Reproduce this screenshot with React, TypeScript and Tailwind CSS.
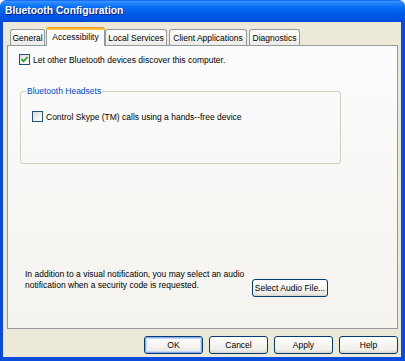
import React from "react";

function CheckBox({ checked }: { checked?: boolean }) {
  return (
    <div className="w-[11px] h-[11px] shrink-0 border border-[#1C5180] bg-[linear-gradient(135deg,#DCDCD7_0%,#F2F2EE_60%,#FFFFFF_100%)] flex items-center justify-center">
      {checked && (
        <svg width="9" height="9" viewBox="0 0 9 9">
          <path d="M1.5 4.2 L3.5 6.3 L7.6 2" fill="none" stroke="#21A121" strokeWidth="1.7" />
        </svg>
      )}
    </div>
  );
}

function Tab({ label, w, selected }: { label: string; w: number; selected?: boolean }) {
  if (selected) {
    return (
      <div className="relative z-10 -mb-px h-[19px] w-[59px] rounded-t-[3px] border-x border-[#919B9C] bg-[#FCFCFE] flex flex-col">
        <div className="h-[3px] -mx-px rounded-t-[3px] bg-[linear-gradient(to_bottom,#E68B2C_0%,#FFC73C_70%,#FFC73C_100%)]" />
        <div className="flex-1 flex items-center justify-center pb-[2px] text-black">{label}</div>
      </div>
    );
  }
  return (
    <div
      style={{ width: w }}
      className="h-[16px] rounded-t-[3px] border-x border-t border-[#919B9C] bg-[linear-gradient(to_bottom,#FFFFFF_0%,#F5F4F0_60%,#ECEBE6_100%)] flex items-center justify-center text-black"
    >
      {label}
    </div>
  );
}

function Btn({ label, w, def }: { label: string; w: number; def?: boolean }) {
  return (
    <div
      style={{ width: w }}
      className="h-[18px] rounded-[3px] border border-[#003C74] bg-[linear-gradient(to_bottom,#FFFFFF_0%,#F6F5F1_50%,#ECEBE6_85%,#D6D0C5_100%)] flex items-stretch"
    >
      <div
        className={
          "flex-1 flex items-center justify-center rounded-[2px] text-black " +
          (def ? "border border-[#8AA9EE] shadow-[inset_0_0_0_1px_#C9DBFA]" : "")
        }
      >
        {label}
      </div>
    </div>
  );
}

export default function App() {
  return (
    <div className="w-[405px] h-[361px] bg-white flex flex-col font-['Liberation_Sans',Arial,sans-serif] text-[8.5px] leading-[10px]">
      <div className="h-[22px] shrink-0 rounded-t-[6px] bg-[linear-gradient(to_bottom,#0058EE_0%,#3A93FF_6%,#2385FF_14%,#0B70F8_30%,#0262EE_50%,#0057E5_70%,#0054E3_88%,#0049D0_100%)] flex items-center pl-[5px]">
        <span className="text-white font-bold text-[10.3px] leading-[12px] [text-shadow:1px_1px_0_#0A1883]">
          Bluetooth Configuration
        </span>
      </div>
      <div className="flex-1 flex flex-col bg-[#ECE9D8] border-l-[3px] border-r-[4px] border-b-[4px] border-[#0B4BDB] pt-[5px]">
        <div className="h-[18px] flex items-end gap-[2px] ml-[4px] pl-[3px]">
          <Tab label="General" w={35} />
          <div className="-ml-[1px]">
            <Tab label="Accessibility" w={59} selected />
          </div>
          <div className="-ml-[2px]">
            <Tab label="Local Services" w={62} />
          </div>
          <Tab label="Client Applications" w={78} />
          <Tab label="Diagnostics" w={51} />
        </div>
        <div className="ml-[4px] w-[391px] h-[284px] border border-[#919B9C] bg-[linear-gradient(to_bottom,#FCFCFE_0%,#F7F6F3_60%,#F4F3EE_100%)] flex flex-col">
          <div className="mt-[8px] ml-[11px] flex items-center gap-[3px]">
            <CheckBox checked />
            <span className="text-black">Let other Bluetooth devices discover this computer.</span>
          </div>
          <div className="relative mt-[26px] ml-[12px] w-[321px] h-[73px] rounded-[3px] border border-[#D0D0BF]">
            <span className="absolute left-[5px] -top-[6px] px-[1px] bg-[#FAFAFB] text-[#0046D5]">
              Bluetooth Headsets
            </span>
            <div className="mt-[19px] ml-[11px] flex items-center gap-[3px]">
              <CheckBox />
              <span className="text-black">Control Skype (TM) calls using a hands--free device</span>
            </div>
          </div>
          <div className="mt-[105px] ml-[17px] flex items-start">
            <div className="w-[227px] text-black leading-[11px]">
              In addition to a visual notification, you may select an audio notification when a security code is requested.
            </div>
            <div className="mt-[10px]">
              <Btn label="Select Audio File..." w={76} />
            </div>
          </div>
        </div>
        <div className="mt-[7px] mr-[3px] flex justify-end gap-[6px]">
          <Btn label="OK" w={59} def />
          <Btn label="Cancel" w={59} />
          <Btn label="Apply" w={59} />
          <Btn label="Help" w={59} />
        </div>
      </div>
    </div>
  );
}
